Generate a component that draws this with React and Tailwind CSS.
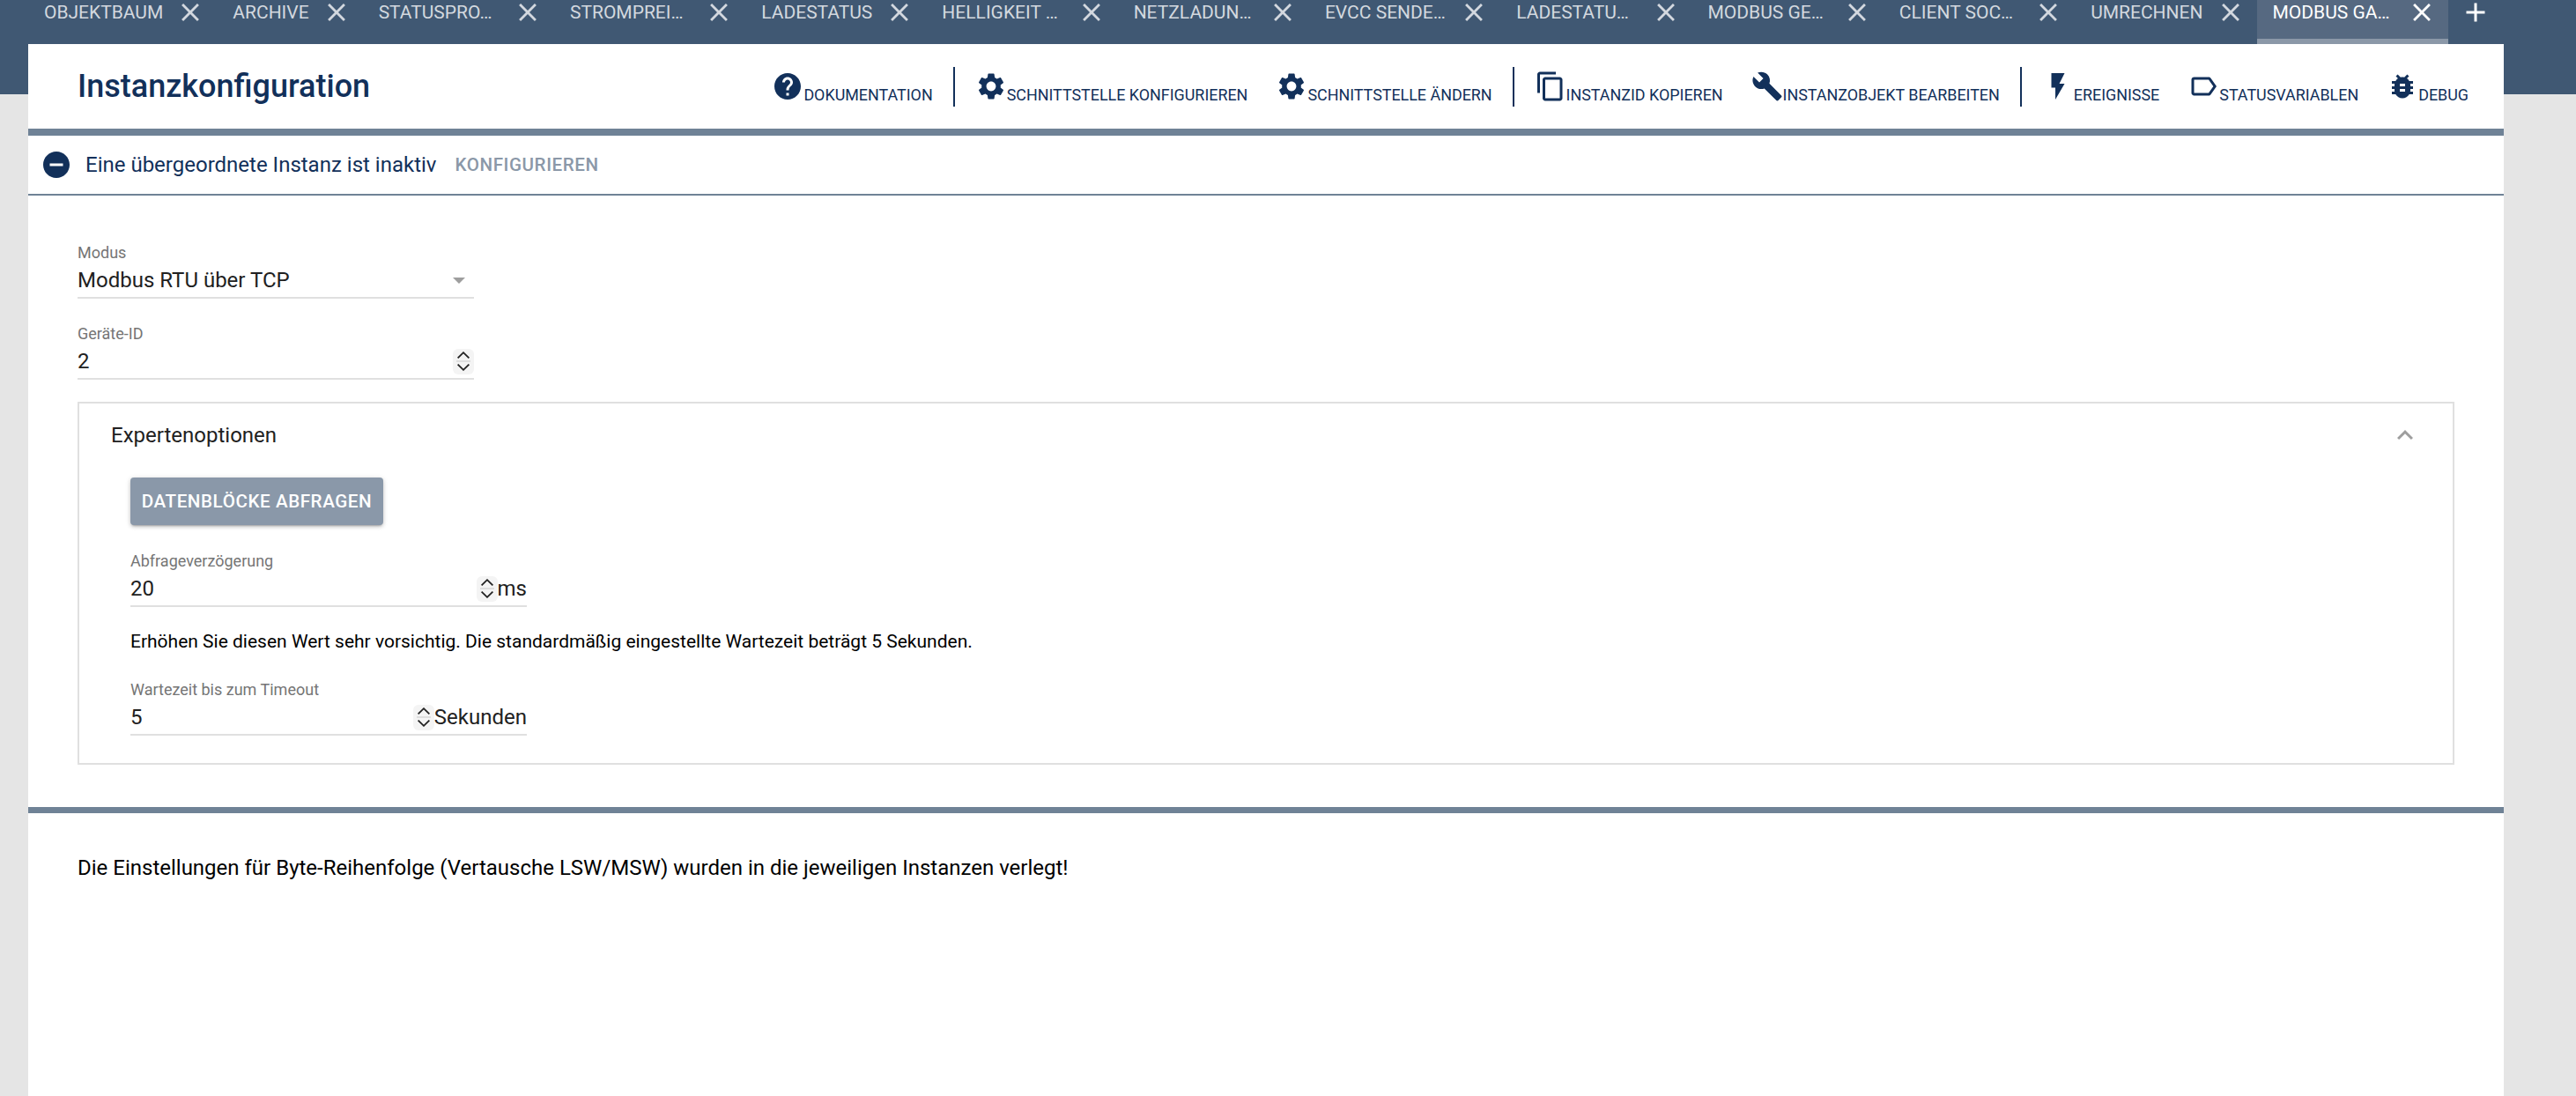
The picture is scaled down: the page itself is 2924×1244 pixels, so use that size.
import React from 'react';

const ICONS = {
    help: 'M12 2C6.48 2 2 6.48 2 12s4.48 10 10 10 10-4.48 10-10S17.52 2 12 2zm1 17h-2v-2h2v2zm2.07-7.75l-.9.92C13.45 12.9 13 13.5 13 15h-2v-.5c0-1.1.45-2.1 1.17-2.83l1.24-1.26c.37-.36.59-.86.59-1.41 0-1.1-.9-2-2-2s-2 .9-2 2H8c0-2.21 1.79-4 4-4s4 1.79 4 4c0 .88-.36 1.68-.93 2.25z',
    settings: 'M19.14 12.94c.04-.3.06-.61.06-.94 0-.32-.02-.64-.07-.94l2.03-1.58c.18-.14.23-.41.12-.61l-1.92-3.32c-.12-.22-.37-.29-.59-.22l-2.39.96c-.5-.38-1.03-.7-1.62-.94l-.36-2.54c-.04-.24-.24-.41-.48-.41h-3.84c-.24 0-.43.17-.47.41l-.36 2.54c-.59.24-1.13.57-1.62.94l-2.39-.96c-.22-.08-.47 0-.59.22L2.74 8.87c-.12.21-.08.47.12.61l2.03 1.58c-.05.3-.09.63-.09.94s.02.64.07.94l-2.03 1.58c-.18.14-.23.41-.12.61l1.92 3.32c.12.22.37.29.59.22l2.39-.96c.5.38 1.03.7 1.62.94l.36 2.54c.05.24.24.41.48.41h3.84c.24 0 .44-.17.47-.41l.36-2.54c.59-.24 1.13-.56 1.62-.94l2.39.96c.22.08.47 0 .59-.22l1.92-3.32c.12-.22.07-.47-.12-.61l-2.01-1.58zM12 15.6c-1.98 0-3.6-1.62-3.6-3.6s1.62-3.6 3.6-3.6 3.6 1.62 3.6 3.6-1.62 3.6-3.6 3.6z',
    copy: 'M16 1H4c-1.1 0-2 .9-2 2v14h2V3h12V1zm3 4H8c-1.1 0-2 .9-2 2v14c0 1.1.9 2 2 2h11c1.1 0 2-.9 2-2V7c0-1.1-.9-2-2-2zm0 16H8V7h11v14z',
    build: 'M22.7 19l-9.1-9.1c.9-2.3.4-5-1.5-6.9-2-2-5-2.4-7.4-1.3L9 6 6 9 1.6 4.7C.4 7.1.9 10.1 2.9 12.1c1.9 1.9 4.6 2.4 6.9 1.5l9.1 9.1c.4.4 1 .4 1.4 0l2.3-2.3c.5-.4.5-1.1.1-1.4z',
    flash: 'M7 2v11h3v9l7-12h-4l4-8z',
    label: 'M17.63 5.84C17.27 5.33 16.67 5 16 5L5 5.01C3.9 5.01 3 5.9 3 7v10c0 1.1.9 1.99 2 1.99L16 19c.67 0 1.27-.33 1.63-.84L22 12l-4.37-6.16zM16 17H5V7h11l3.55 5L16 17z',
    bug: 'M20 8h-2.81c-.45-.78-1.07-1.45-1.82-1.96L17 4.41 15.59 3l-2.17 2.17C12.96 5.06 12.49 5 12 5c-.49 0-.96.06-1.41.17L8.41 3 7 4.41l1.62 1.63C7.88 6.55 7.26 7.22 6.81 8H4v2h2.09c-.05.33-.09.66-.09 1v1H4v2h2v1c0 .34.04.67.09 1H4v2h2.81c1.04 1.79 2.97 3 5.19 3s4.15-1.21 5.19-3H20v-2h-2.09c.05-.33.09-.66.09-1v-1h2v-2h-2v-1c0-.34-.04-.67-.09-1H20V8zm-6 8h-4v-2h4v2zm0-4h-4v-2h4v2z',
    remove: 'M12 2C6.48 2 2 6.48 2 12s4.48 10 10 10 10-4.48 10-10S17.52 2 12 2zm5 11H7v-2h10v2z',
    close: 'M19 6.41L17.59 5 12 10.59 6.41 5 5 6.41 10.59 12 5 17.59 6.41 19 12 13.41 17.59 19 19 17.59 13.41 12z',
    add: 'M19 13h-6v6h-2v-6H5v-2h6V5h2v6h6v2z',
    expandLess: 'M12 8l-6 6 1.41 1.41L12 10.83l4.59 4.58L18 14z',
};

const tabs = [
    'OBJEKTBAUM', 'ARCHIVE', 'STATUSPRO…', 'STROMPREI…', 'LADESTATUS',
    'HELLIGKEIT …', 'NETZLADUN…', 'EVCC SENDE…', 'LADESTATU…',
    'MODBUS GE…', 'CLIENT SOC…', 'UMRECHNEN',
];

const Icon = ({ path, className }) => (
    <svg viewBox="0 0 24 24" fill="currentColor" className={className}>
        <path d={path} />
    </svg>
);

const Tab = ({ title, active }) => (
    <div className={`flex h-[50px] pl-[18px] pr-[12px] items-start border-b-[6px] ${active ? 'bg-[#566981] border-[#8b98a8] text-white' : 'border-transparent text-[#d3d8df]'}`}>
        <span className={`text-[21px] leading-[28px] whitespace-nowrap ${title.endsWith('…') ? 'w-[138.3px]' : ''}`}>{title}</span>
        <span className="ml-[13px] flex h-[28px] w-[36px] items-center justify-center">
            <Icon path={ICONS.close} className="h-[34px] w-[34px] shrink-0" />
        </span>
    </div>
);

const ToolItem = ({ icon, label }) => (
    <div className="flex h-[36px] items-end px-4">
        <Icon path={icon} className="h-[36px] w-[36px] shrink-0" />
        <span className="mb-[-1px] text-[17.9px] leading-[18px] whitespace-nowrap">{label}</span>
    </div>
);

const Divider = () => <div className="mx-[7px] h-[45px] w-[2px] bg-[#12305a]" />;

const Spinner = () => (
    <div className="flex h-[29px] w-[24px] shrink-0 flex-col items-center justify-center rounded-[6px] bg-[#f4f4f4]">
        <svg viewBox="0 0 14 8" fill="none" stroke="#222" strokeWidth="1.8" className="h-[8px] w-[14px]">
            <path d="M0.6 7.4L7 1.2l6.4 6.2" />
        </svg>
        <div className="my-[2px] h-[2px] w-[16px] bg-[#dedede]" />
        <svg viewBox="0 0 14 8" fill="none" stroke="#222" strokeWidth="1.8" className="h-[8px] w-[14px]">
            <path d="M0.6 0.6L7 6.8l6.4-6.2" />
        </svg>
    </div>
);

const Field = ({ label, value, suffix, select, className }) => (
    <div className={`w-[450px] ${className || ''}`}>
        <div className="h-[20px] text-[18px] leading-[20px] text-[#757575]">{label}</div>
        <div className="flex h-[42px] items-center border-b-2 border-[#e0e0e0] pt-[2px] text-[24px] text-[#212121]">
            <span className="flex-1">{value}</span>
            {select ? (
                <span className="mr-[10px] h-0 w-0 border-x-[7px] border-t-[7px] border-x-transparent border-t-[#9e9e9e]" />
            ) : (
                <Spinner />
            )}
            {suffix && <span>{suffix}</span>}
        </div>
    </div>
);

const App = () => {
    return (
        <div className="flex h-[1244px] flex-col overflow-hidden bg-[linear-gradient(#405873_107px,#e5e5e5_107px)] font-[Roboto,sans-serif]">
            <div className="flex h-[50px] pl-[32px]">
                {tabs.map((t) => (
                    <Tab key={t} title={t} />
                ))}
                <Tab title="MODBUS GA…" active />
                <div className="ml-[13px] flex h-[28px] items-center text-white">
                    <Icon path={ICONS.add} className="h-[36px] w-[36px]" />
                </div>
            </div>

            <div className="ml-[32px] flex w-[2810px] flex-1 flex-col bg-white">
                <div className="flex h-[96px] items-center justify-between pl-[56px] pr-[24px] text-[#12305a]">
                    <h1 className="text-[36px] font-medium">Instanzkonfiguration</h1>
                    <div className="flex items-center">
                        <ToolItem icon={ICONS.help} label="DOKUMENTATION" />
                        <Divider />
                        <ToolItem icon={ICONS.settings} label="SCHNITTSTELLE KONFIGURIEREN" />
                        <ToolItem icon={ICONS.settings} label="SCHNITTSTELLE ÄNDERN" />
                        <Divider />
                        <ToolItem icon={ICONS.copy} label="INSTANZID KOPIEREN" />
                        <ToolItem icon={ICONS.build} label="INSTANZOBJEKT BEARBEITEN" />
                        <Divider />
                        <ToolItem icon={ICONS.flash} label="EREIGNISSE" />
                        <ToolItem icon={ICONS.label} label="STATUSVARIABLEN" />
                        <ToolItem icon={ICONS.bug} label="DEBUG" />
                    </div>
                </div>
                <div className="h-[8px] bg-[#6f8296]" />

                <div className="flex h-[68px] items-center border-b-2 border-[#6f8296] pl-[14px] text-[#12305a]">
                    <Icon path={ICONS.remove} className="h-[36px] w-[36px]" />
                    <span className="ml-[15px] text-[24px]">Eine übergeordnete Instanz ist inaktiv</span>
                    <span className="ml-[21px] text-[20.6px] font-medium tracking-[0.57px] text-[#8b98a8]">KONFIGURIEREN</span>
                </div>

                <div className="px-[56px] pt-[55px]">
                    <Field label="Modus" value="Modbus RTU über TCP" select />
                    <Field label="Geräte-ID" value="2" className="mt-[30px]" />

                    <div className="mt-[25px] h-[412px] border-2 border-[#e0e0e0]">
                        <div className="flex h-[72px] items-center justify-between pl-[36px] pr-[36px] text-[24px] text-[#212121]">
                            <span>Expertenoptionen</span>
                            <Icon path={ICONS.expandLess} className="h-[36px] w-[36px] text-[#9e9e9e]" />
                        </div>
                        <div className="pl-[58px] pt-[12px]">
                            <button className="h-[54px] w-[287px] rounded-[4px] bg-[#8a98a9] text-[20.6px] font-medium tracking-[0.57px] text-white shadow-[0_3px_2px_-2px_rgba(0,0,0,0.2),0_2px_4px_0_rgba(0,0,0,0.14),0_1px_6px_0_rgba(0,0,0,0.12)]">
                                DATENBLÖCKE ABFRAGEN
                            </button>
                            <Field label="Abfrageverzögerung" value="20" suffix="ms" className="mt-[31px]" />
                            <p className="mt-[27px] text-[21px] leading-[24px] text-black">
                                Erhöhen Sie diesen Wert sehr vorsichtig. Die standardmäßig eingestellte Wartezeit beträgt 5 Sekunden.
                            </p>
                            <Field label="Wartezeit bis zum Timeout" value="5" suffix="Sekunden" className="mt-[33px]" />
                        </div>
                    </div>
                </div>

                <div className="mt-[48px] h-[7px] bg-[#6f8296]" />
                <p className="pl-[56px] pt-[47px] text-[24px] leading-[30px] text-black">
                    Die Einstellungen für Byte-Reihenfolge (Vertausche LSW/MSW) wurden in die jeweiligen Instanzen verlegt!
                </p>
            </div>
        </div>
    );
};

export default App;
